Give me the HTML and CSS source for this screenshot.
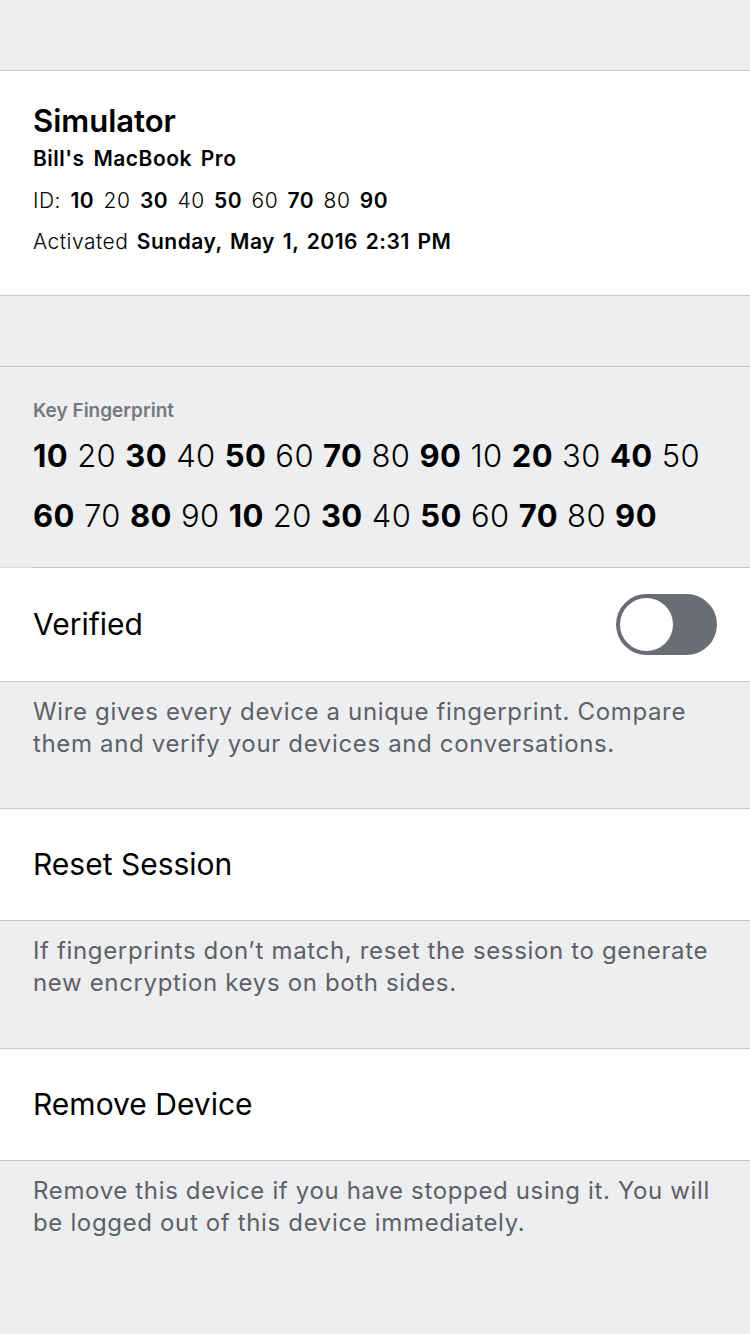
FILE: index.html
```html
<!DOCTYPE html>
<html>
<head>
<meta charset="utf-8">
<link rel="stylesheet" href="styles.css">
</head>
<body>
<div class="screen">
  <div class="gap-top"></div>
  <section class="device-card">
    <div class="device-name">Simulator</div>
    <div class="device-model">Bill's MacBook Pro</div>
    <div class="device-id">ID: <b>10</b> 20 <b>30</b> 40 <b>50</b> 60 <b>70</b> 80 <b>90</b></div>
    <div class="device-activated">Activated <b>Sunday, May 1, 2016 2:31 PM</b></div>
  </section>
  <div class="gap-mid"></div>
  <section class="fingerprint">
    <div class="fp-label">Key Fingerprint</div>
    <div class="fp-value"><b>10</b> 20 <b>30</b> 40 <b>50</b> 60 <b>70</b> 80 <b>90</b> 10 <b>20</b> 30 <b>40</b> 50 <b>60</b> 70 <b>80</b> 90 <b>10</b> 20 <b>30</b> 40 <b>50</b> 60 <b>70</b> 80 <b>90</b></div>
  </section>
  <section class="row row-verified">
    <span class="row-title">Verified</span>
    <span class="toggle"><span class="knob"></span></span>
  </section>
  <p class="footer footer-1">Wire gives every device a unique fingerprint. Compare them and verify your devices and conversations.</p>
  <section class="row row-plain">
    <span class="row-title">Reset Session</span>
  </section>
  <p class="footer footer-2">If fingerprints don’t match, reset the session to generate new encryption keys on both sides.</p>
  <section class="row row-plain">
    <span class="row-title">Remove Device</span>
  </section>
  <p class="footer footer-3">Remove this device if you have stopped using it. You will be logged out of this device immediately.</p>
</div>
</body>
</html>
```
FILE: styles.css
```css
html, body {
  margin: 0;
  padding: 0;
  background: #edeef0;
}
body {
  font-family: Inter, Roboto, "Liberation Sans", sans-serif;
  color: #000;
  width: 750px;
  height: 1334px;
  overflow: hidden;
}
.screen {
  display: flex;
  flex-direction: column;
}
.gap-top {
  height: 70px;
}
.device-card {
  background: #fff;
  border-top: 1px solid #c6c8cc;
  border-bottom: 1px solid #c6c8cc;
  height: 226px;
  box-sizing: border-box;
  padding: 0 33px;
  display: flex;
  flex-direction: column;
}
.device-name {
  font-size: 31px;
  font-weight: 600;
  line-height: 36px;
  margin-top: 32px;
}
.device-model {
  font-size: 21px;
  font-weight: 600;
  line-height: 26px;
  margin-top: 7px;
  letter-spacing: 0.5px;
  word-spacing: 3px;
}
.device-id,
.device-activated {
  font-size: 21px;
  font-weight: 300;
  line-height: 26px;
  margin-top: 16px;
  letter-spacing: 0.5px;
  word-spacing: 3px;
}
.device-activated {
  margin-top: 15px;
  word-spacing: 2px;
}
.device-id b,
.device-activated b {
  font-weight: 600;
}
.gap-mid {
  height: 70px;
}
.fingerprint {
  border-top: 1px solid #c6c8cc;
  padding: 32px 33px 0 1px;
  margin-left: 32px;
  height: 202px;
  box-sizing: border-box;
  border-bottom: 1px solid #c6c8cc;
  position: relative;
}
.fingerprint::before,
.fingerprint::after {
  content: "";
  position: absolute;
  left: -32px;
  width: 32px;
}
.fingerprint::before {
  top: -1px;
  border-top: 1px solid #c6c8cc;
}
.fingerprint::after {
  bottom: -1px;
  border-bottom: 1px solid #dcdde0;
}
.fp-label {
  font-size: 19px;
  font-weight: 600;
  color: #76787d;
  line-height: 24px;
}
.fp-value {
  font-size: 31px;
  font-weight: 300;
  line-height: 60px;
  margin-top: 3px;
  letter-spacing: 0.4px;
}
.fp-value b {
  font-weight: 700;
}
.row {
  background: #fff;
  border-bottom: 1px solid #c6c8cc;
  display: flex;
  align-items: center;
  padding: 0 33px;
  box-sizing: border-box;
}
.row-verified {
  height: 114px;
  justify-content: space-between;
}
.row-plain {
  height: 113px;
  border-top: 1px solid #c6c8cc;
}
.row-title {
  font-size: 30px;
  font-weight: 400;
  line-height: 36px;
  margin-top: -2px;
}
.toggle {
  width: 101px;
  height: 61px;
  border-radius: 31px;
  background: #6a6d73;
  display: flex;
  align-items: center;
  padding: 0 4px;
  box-sizing: border-box;
}
.knob {
  width: 53px;
  height: 53px;
  border-radius: 50%;
  background: #fff;
}
.footer {
  margin: 0;
  padding: 14px 28px 0 33px;
  box-sizing: border-box;
  font-size: 24px;
  line-height: 32px;
  letter-spacing: 0.65px;
  color: #5e6167;
  font-weight: 400;
}
.footer-1 {
  height: 126px;
}
.footer-2 {
  height: 127px;
}
.footer-3 {
  flex: 1;
}
```
